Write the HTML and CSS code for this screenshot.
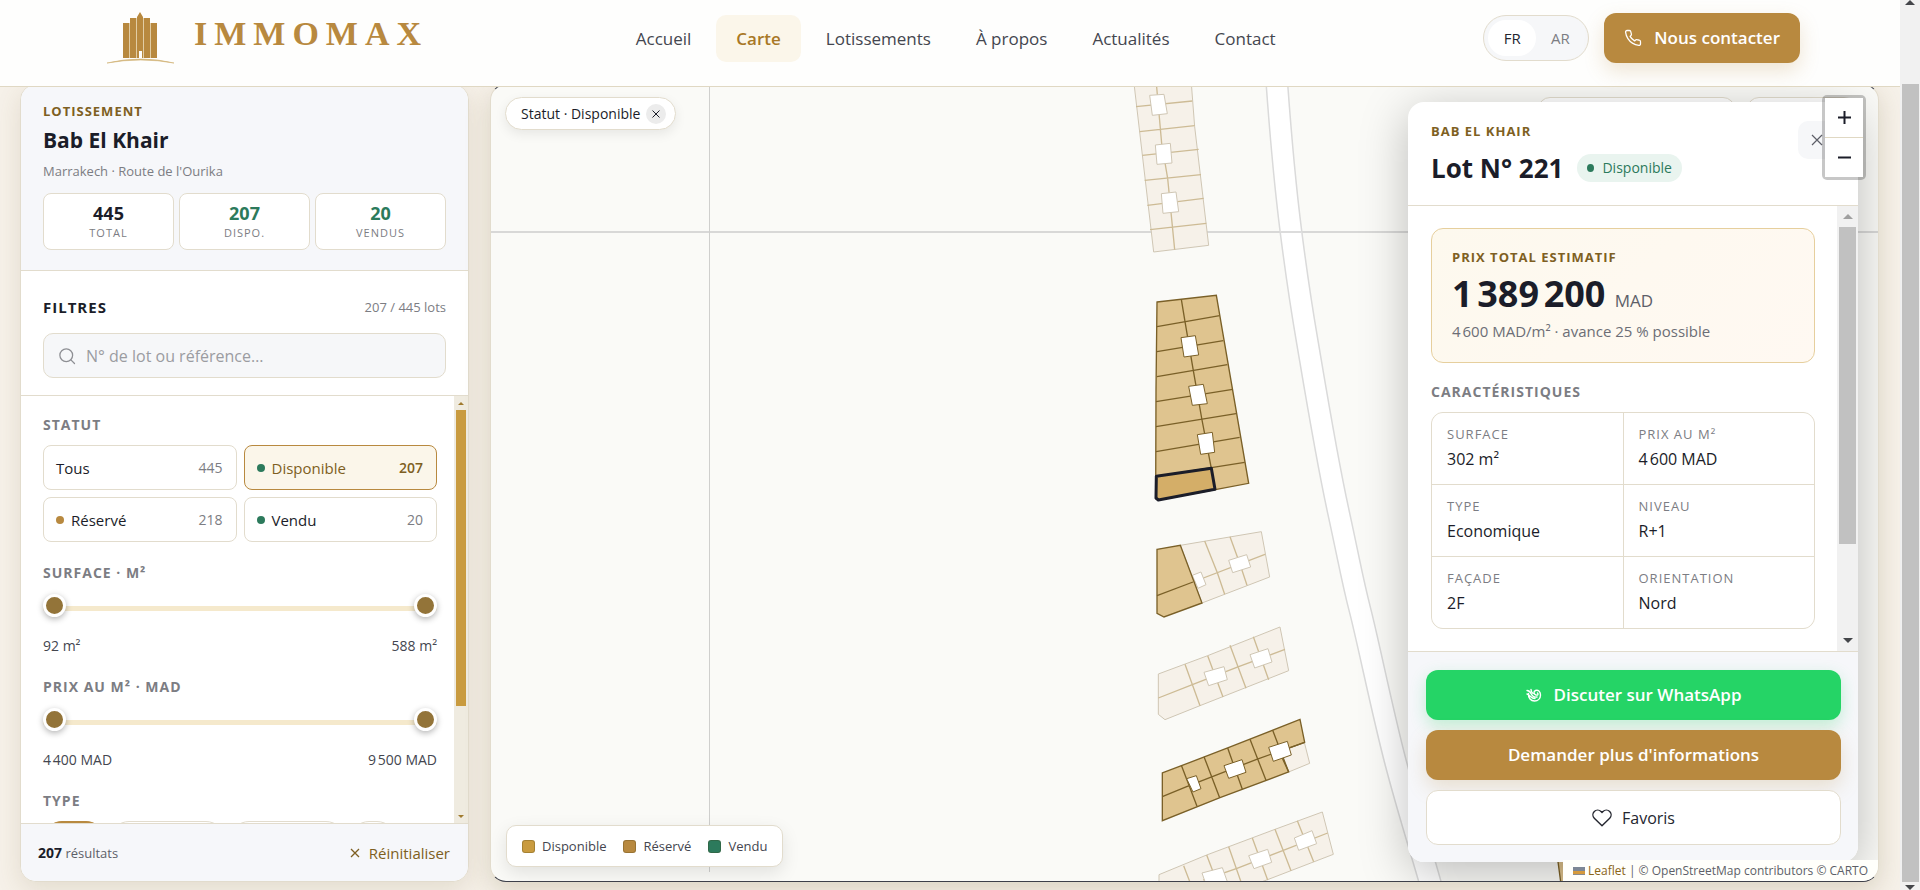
FILE: index.html
```html
<!DOCTYPE html>
<html lang="fr">
<head>
<meta charset="utf-8">
<title>IMMOMAX · Carte</title>
<link rel="stylesheet" href="styles.css">
</head>
<body>
<div class="page">
  <header class="topbar">
    <div class="topbar-inner">
      <a class="brand" href="#">
        <svg class="brand-mark" width="68" height="54" viewBox="0 0 68 54" aria-hidden="true">
          <g fill="#b8893f">
            <path d="M16 12h6v35h-6zM23 7h6v40h-6zM37 7h6v40h-6zM44 12h6v35h-6z"/>
            <path d="M30 6l3-5 3 5v34h-4v7h-2z"/><path d="M35 40h1v7h-1z"/>
          </g>
          <path d="M22.500 12v35M29.500 7v40M36.500 7v40M43.500 12v35" stroke="#e2cda4" fill="none"/>
          <path d="M0 52Q34 44 67 52Q34 46 0 52z" fill="#d2b377" stroke="#d2b377" stroke-width=".6"/>
        </svg>
        <span class="brand-name">IMMOMAX</span>
      </a>
      <nav class="nav">
        <a href="#">Accueil</a>
        <a class="active" href="#">Carte</a>
        <a href="#">Lotissements</a>
        <a href="#">À propos</a>
        <a href="#">Actualités</a>
        <a href="#">Contact</a>
      </nav>
      <div class="actions">
        <div class="lang">
          <button class="on" type="button">FR</button>
          <button type="button">AR</button>
        </div>
        <a class="btn btn-gold cta" href="#">
          <svg width="18" height="18" viewBox="0 0 24 24" fill="none" stroke="currentColor" stroke-width="1.700" stroke-linejoin="round" stroke-linecap="round" aria-hidden="true"><path d="M22 16.900v3a2 2 0 0 1-2.200 2 19.800 19.800 0 0 1-8.600-3.100 19.500 19.500 0 0 1-6-6A19.800 19.800 0 0 1 2.100 4.200 2 2 0 0 1 4.100 2h3a2 2 0 0 1 2 1.700c.1 1 .4 1.900.7 2.800a2 2 0 0 1-.5 2.100L8.100 9.900a16 16 0 0 0 6 6l1.300-1.300a2 2 0 0 1 2.100-.4c.9.300 1.800.6 2.800.7a2 2 0 0 1 1.700 2z"/></svg>
          Nous contacter
        </a>
      </div>
    </div>
  </header>

  <main class="layout">
    <aside class="sidebar">
      <section class="summary">
        <p class="eyebrow">LOTISSEMENT</p>
        <h1>Bab El Khair</h1>
        <p class="place">Marrakech · Route de l'Ourika</p>
        <div class="stats">
          <div class="stat"><strong>445</strong><span>TOTAL</span></div>
          <div class="stat green"><strong>207</strong><span>DISPO.</span></div>
          <div class="stat green"><strong>20</strong><span>VENDUS</span></div>
        </div>
      </section>
      <section class="search">
        <div class="search-head"><h2>FILTRES</h2><span>207 / 445 lots</span></div>
        <label class="search-box">
          <svg width="18" height="18" viewBox="0 0 24 24" fill="none" stroke="#8e8f94" stroke-width="1.700" stroke-linecap="round" aria-hidden="true"><circle cx="11" cy="11" r="8.500"/><path d="M17.200 17.200 22 22"/></svg>
          <input type="text" placeholder="N° de lot ou référence…" aria-label="N° de lot ou référence">
        </label>
      </section>
      <div class="filters-wrap">
        <div class="filters">
          <section>
            <h3>STATUT</h3>
            <div class="status-grid">
              <button type="button">Tous<em>445</em></button>
              <button type="button" class="selected"><i class="dot green-dot"></i>Disponible<em>207</em></button>
              <button type="button"><i class="dot gold-dot"></i>Réservé<em>218</em></button>
              <button type="button"><i class="dot green-dot"></i>Vendu<em>20</em></button>
            </div>
          </section>
          <section>
            <h3>SURFACE · M²</h3>
            <div class="range">
              <span class="range-track"></span>
              <input type="range" min="92" max="588" value="92" aria-label="Surface minimale">
              <input type="range" min="92" max="588" value="588" aria-label="Surface maximale">
            </div>
            <div class="range-values"><span>92 m²</span><span>588 m²</span></div>
          </section>
          <section>
            <h3>PRIX AU M² · MAD</h3>
            <div class="range">
              <span class="range-track"></span>
              <input type="range" min="4400" max="9500" value="4400" aria-label="Prix minimal">
              <input type="range" min="4400" max="9500" value="9500" aria-label="Prix maximal">
            </div>
            <div class="range-values"><span>4&#8239;400 MAD</span><span>9&#8239;500 MAD</span></div>
          </section>
          <section>
            <h3>TYPE</h3>
            <div class="chips">
              <button type="button" class="chip chip-s chip-on" aria-label="Type 1"></button>
              <button type="button" class="chip chip-l" aria-label="Type 2"></button>
              <button type="button" class="chip chip-l" aria-label="Type 3"></button>
              <button type="button" class="chip chip-xs" aria-label="Type 4"></button>
            </div>
          </section>
        </div>
        <div class="bar bar-gold" aria-hidden="true">
          <span class="arrow up"></span><span class="thumb"></span><span class="rest"></span><span class="arrow down"></span>
        </div>
      </div>
      <footer class="results">
        <span><b>207</b> résultats</span>
        <button type="button" class="reset">
          <svg width="10" height="10" viewBox="0 0 10 10" stroke="currentColor" stroke-width="1.300" aria-hidden="true"><path d="M1 1l8 8M9 1l-8 8"/></svg>
          Réinitialiser
        </button>
      </footer>
    </aside>

    <section class="map" aria-label="Carte">
      <svg class="canvas" width="1388" height="797" aria-hidden="true">
        <g transform="translate(-491 -85)">
          <path d="M491 232H1879" stroke="#d8d8d7" stroke-width="2"/>
          <path d="M709.500 85V872" stroke="#cfcfcd"/>
          <path d="M1277 85C1281 140 1285 185 1291 232S1301 305 1307 340 1326 455 1338 510 1352 579 1360 610 1382 710 1395 760 1421 850 1430 882L1434 896" fill="none" stroke="#dadada" stroke-width="23"/>
          <path d="M1277 85C1281 140 1285 185 1291 232S1301 305 1307 340 1326 455 1338 510 1352 579 1360 610 1382 710 1395 760 1421 850 1430 882L1434 896" fill="none" stroke="#ffffff" stroke-width="20"/>
          <path d="M1281 232H1301" stroke="#dcdcdc" stroke-width="2"/>
          <!-- upper block, not available -->
          <g class="off" transform="translate(1100 80) scale(.33333)">
            <path class="lot" d="M102 10 161 516 326 496 284 140 274 10z"/>
            <path class="cut" d="M108 80 277 63M119 155 284 137M127 226 296 208M134 301 303 284M142 376 311 355M150 449 319 430M169 10 185 190 203 295 224 509"/>
            <path class="void" d="M149 46 192 43 202 101 157 106zM166 195 211 190 216 249 171 253zM184 341 228 336 236 395 189 400z"/>
          </g>
          <!-- main available block -->
          <g class="on" transform="translate(1120 280) scale(.33333)">
            <path class="lot" d="M111 66 289 46 386 610 286 629 114 660 107 655 108 330z"/>
            <path class="cut" d="M111 140 299 107M111 215 310 182M111 290 322 254M108 365 338 328M108 440 348 401M108 515 359 472M108 589 374 547M184 58 195 125 220 272 246 420 274 565"/>
            <path class="void" d="M183 173 226 167 236 225 192 231zM206 319 250 313 262 371 217 376zM232 464 277 457 284 517 242 523z"/>
            <path class="picked" d="M109 589 274 565 285 628 115 660 108 654z"/>
          </g>
          <g transform="translate(1120 510) scale(.33333)">
            <g class="off">
              <path class="lot" d="M181 106 424 65 449 201 246 279z"/>
              <path class="cut" d="M254 93 292 188 314 253M330 80 359 160 381 226M219 216 435 133"/>
              <path class="void" d="M217 196 243 186 258 224 234 235zM326 151 380 134 392 171 338 188z"/>
              <path class="lot" d="M115 492 263 437 480 351 506 482 240 587 135 629 115 613z"/>
              <path class="cut" d="M195 463 240 587M263 437 309 561M330 406 378 535M400 380 446 509M115 564 219 523 356 470 495 418"/>
              <path class="void" d="M252 487 312 470 322 509 266 527zM390 434 444 416 456 456 404 474z"/>
              <path class="lot" d="M553 697 569 760 506 786 478 725z"/>
              <path class="lot" d="M117 1094 260 1035 465 958 607 906 640 1033 440 1110 117 1230z"/>
              <path class="cut" d="M191 1067 215 1130M260 1035 300 1140M326 1010 368 1130M397 984 443 1110M465 958 513 1082M532 932 581 1055M250 1110 351 1075 488 1022 623 969"/>
              <path class="void" d="M246 1089 307 1073 322 1115 262 1135zM386 1037 443 1018 455 1057 402 1076zM523 984 576 962 590 1001 536 1021z"/>
            </g>
            <g class="on">
              <path class="lot" d="M111 118 181 106 246 279 132 321 111 310z"/>
              <path class="cut" d="M111 257 219 216"/>
              <path class="lot" d="M127 789 323 714 540 628 554 697 478 725 506 786 300 863 127 932z"/>
              <path class="cut" d="M184 766 231 889M252 740 299 863M323 714 367 838M390 688 438 811M458 661 506 786M127 860 200 830 277 800 410 748 554 697"/>
              <path class="void" d="M200 806 229 797 243 836 219 846zM312 767 366 749 378 787 326 805zM446 712 502 694 514 735 460 754z"/>
            </g>
            <path d="M1312 1040 1322 1115 1460 1115 1440 1040z" fill="#dcc08a" stroke="#7a6028" stroke-width="4"/>
          </g>
        </g>
      </svg>

      <div class="map-chip">Statut · Disponible
        <button type="button" aria-label="Retirer le filtre"><svg width="8" height="8" viewBox="0 0 8 8" stroke="currentColor" aria-hidden="true"><path d="M.5.5l7 7M7.500.5l-7 7"/></svg></button>
      </div>
      <div class="map-tools"><span class="tool tool-wide"></span><span class="tool"></span></div>

      <div class="legend">
        <span><i class="sw sw-a"></i>Disponible</span>
        <span><i class="sw sw-b"></i>Réservé</span>
        <span><i class="sw sw-c"></i>Vendu</span>
      </div>

      <article class="panel">
        <header class="panel-head">
          <div>
            <p class="eyebrow">BAB EL KHAIR</p>
            <div class="panel-title"><h2>Lot N° 221</h2><span class="badge"><i></i>Disponible</span></div>
          </div>
          <button type="button" class="close" aria-label="Fermer"><svg width="12" height="12" viewBox="0 0 12 12" stroke="currentColor" stroke-width="1.200" aria-hidden="true"><path d="M1 1l10 10M11 1 1 11"/></svg></button>
        </header>
        <div class="panel-mid">
          <div class="panel-body">
            <div class="price">
              <p class="eyebrow">PRIX TOTAL ESTIMATIF</p>
              <p class="amount">1&#8239;389&#8239;200 <small>MAD</small></p>
              <p class="note">4&#8239;600 MAD/m² · avance 25 % possible</p>
            </div>
            <h3>CARACTÉRISTIQUES</h3>
            <dl class="specs">
              <div><dt>SURFACE</dt><dd>302 m²</dd></div>
              <div><dt>PRIX AU M²</dt><dd>4&#8239;600 MAD</dd></div>
              <div><dt>TYPE</dt><dd>Economique</dd></div>
              <div><dt>NIVEAU</dt><dd>R+1</dd></div>
              <div><dt>FAÇADE</dt><dd>2F</dd></div>
              <div><dt>ORIENTATION</dt><dd>Nord</dd></div>
            </dl>
          </div>
          <div class="bar bar-grey" aria-hidden="true">
            <span class="arrow up"></span><span class="thumb"></span><span class="rest"></span><span class="arrow down"></span>
          </div>
        </div>
        <footer class="panel-foot">
          <a class="btn btn-green" href="#">
            <svg width="16" height="14" viewBox="0 0 16 14" fill="none" stroke="currentColor" stroke-width="1.400" stroke-linecap="round" stroke-linejoin="round" aria-hidden="true"><path d="M2.500 5.500C2 10 5 13 8.500 13s6-2.500 6-6-2.500-5.500-5-4.500-1.500 4 .5 4.500 2.500-1 1.500-2M1 2.500c2 0 3 1 4 3s3 4 6 3.500M5 1.500c0 2 .5 3 2 4M1 6c1.500.5 2.500 1.500 3.500 2.500S7 10.500 9 10.500"/></svg>
            Discuter sur WhatsApp</a>
          <button type="button" class="btn btn-gold">Demander plus d'informations</button>
          <button type="button" class="btn btn-plain">
            <svg width="20" height="18" viewBox="0 0 20 18" fill="none" stroke="currentColor" stroke-width="1.400" stroke-linejoin="round" aria-hidden="true"><path d="M10 16.800 2.300 9.200A4.700 4.700 0 0 1 9 2.500l1 1 1-1a4.700 4.700 0 0 1 6.700 6.700z"/></svg>
            Favoris</button>
        </footer>
      </article>

      <div class="zoom">
        <button type="button" aria-label="Zoomer"><svg width="13" height="13" viewBox="0 0 13 13" stroke="#1b1d29" stroke-width="2" aria-hidden="true"><path d="M0 6.500h13M6.500 0v13"/></svg></button>
        <button type="button" aria-label="Dézoomer"><svg width="13" height="13" viewBox="0 0 13 13" stroke="#1b1d29" stroke-width="2" aria-hidden="true"><path d="M0 6.500h13"/></svg></button>
      </div>

      <p class="credits"><svg width="12" height="8" viewBox="0 0 12 8" aria-hidden="true"><path fill="#7d8796" d="M0 0h12v4H0z"/><path fill="#d59a3c" d="M0 4h12v3H0z"/><path fill="#8b8b8b" d="M0 7h12v1H0z"/></svg> <a href="#">Leaflet</a> | © OpenStreetMap contributors © CARTO</p>
    </section>
  </main>
</div>
<div class="bar bar-grey page-bar" aria-hidden="true">
  <span class="arrow up dark"></span><span class="thumb"></span><span class="arrow down"></span>
</div>
</body>
</html>
```
FILE: styles.css
```css
* { box-sizing: border-box; }

body {
  margin: 0;
  height: 100vh;
  display: flex;
  overflow: hidden;
  background: #f6f1e9;
  color: #1b1d29;
  font: 15px/20px "Open Sans", "Noto Sans", sans-serif;
}

h1, h2, h3, p, dl, dd { margin: 0; }
button { font: inherit; color: inherit; cursor: pointer; border: 0; background: none; padding: 0; }
a { color: inherit; text-decoration: none; }
em, i { font-style: normal; }

.page { flex: 1; min-width: 0; display: flex; flex-direction: column; }

/* top bar */
.topbar { position: relative; z-index: 20; background: #fefefd; border-bottom: 1px solid #e0d8c3; }
.topbar-inner {
  max-width: 1700px;
  height: 86px;
  margin: 0 auto;
  padding: 0 0 10px 7px;
  display: flex;
  align-items: center;
  justify-content: space-between;
}
.brand { display: flex; align-items: center; gap: 19px; color: #b8893f; }
.brand-name { font: bold 34px/40px "Liberation Serif", serif; letter-spacing: 7px; padding-bottom: 8px; }
.nav { display: flex; gap: 5px; }
.nav a { padding: 11px 20px; font-size: 17px; line-height: 25px; font-weight: 500; color: #44464f; border-radius: 10px; }
.nav .active { background: #fbf6ea; color: #a87826; font-weight: 600; }
.actions { display: flex; align-items: center; gap: 15px; }
.lang { display: flex; padding: 4px; border: 1px solid #e2dccd; border-radius: 24px; background: #f6f7f9; }
.lang button { width: 48px; height: 36px; border-radius: 18px; font-size: 15px; color: #7c7d83; }
.lang .on { background: #fff; color: #24262f; }

.btn {
  display: flex;
  align-items: center;
  justify-content: center;
  gap: 12px;
  height: 50px;
  border-radius: 12px;
  font-size: 17px;
  font-weight: 600;
  color: #fff;
}
.btn-gold { background: #b8893f; box-shadow: 0 8px 20px rgba(184, 137, 63, .22); }
.btn-green { background: #25d466; box-shadow: 0 6px 16px rgba(37, 212, 102, .25); }
.btn-plain { height: 55px; background: #fff; border: 1px solid #e2dccd; color: #24262f; font-size: 16px; font-weight: 500; gap: 10px; }
.cta { padding: 0 20px; }

/* layout */
.layout { flex: 1; min-height: 0; display: flex; gap: 21px; margin-top: -3px; padding: 0 21px 8px 20px; }

.eyebrow { font-size: 13px; font-weight: 700; letter-spacing: 1px; color: #7e5f22; }
h3 { font-size: 14px; line-height: 20px; font-weight: 700; letter-spacing: 1px; color: #7c7d83; }

/* sidebar */
.sidebar {
  width: 449px;
  flex: none;
  display: flex;
  flex-direction: column;
  overflow: hidden;
  background: #fff;
  border: 1px solid #e2dccd;
  border-radius: 16px;
  box-shadow: 0 8px 26px rgba(110, 90, 40, .14);
}
.summary { padding: 16px 22px 20px; background: #f6f7fa; border-bottom: 1px solid #e2dccd; }
.summary h1 { margin-top: 4px; font-size: 21px; line-height: 30px; font-weight: 700; }
.place { margin-top: 6px; font-size: 13px; color: #7c7d83; }
.stats { display: flex; gap: 5px; margin-top: 12px; }
.stat { flex: 1; height: 57px; padding-top: 8px; text-align: center; background: #fff; border: 1px solid #e2dccd; border-radius: 8px; }
.stat strong { display: block; font-size: 18px; line-height: 22px; font-weight: 700; }
.stat span { display: block; font-size: 11px; line-height: 18px; letter-spacing: 1px; color: #7c7d83; }
.green strong { color: #2c7a5c; }

.search { padding: 24px 22px 17px; border-bottom: 1px solid #e2dccd; }
.search-head { display: flex; justify-content: space-between; align-items: center; line-height: 24px; }
.search-head h2 { font-size: 15px; font-weight: 700; letter-spacing: 1px; }
.search-head span { font-size: 13px; color: #7c7d83; }
.search-box { display: flex; align-items: center; gap: 10px; height: 45px; margin-top: 14px; padding: 0 14px; background: #f6f7f9; border: 1px solid #e2dccd; border-radius: 10px; }
.search-box input { flex: 1; min-width: 0; padding: 0; border: 0; outline: 0; background: none; font: inherit; font-size: 16px; }
.search-box input::placeholder { color: #9b9ca1; }

.filters-wrap { flex: 1; min-height: 0; display: flex; }
.filters { flex: 1; overflow: hidden; padding: 19px 17px 0 22px; display: flex; flex-direction: column; gap: 21px; }
.filters h3 { margin-bottom: 10px; }
.status-grid { display: grid; grid-template-columns: 1fr 1fr; gap: 7px; }
.status-grid button { display: flex; align-items: center; height: 45px; padding: 0 13px 0 12px; border: 1px solid #e2dccd; border-radius: 8px; font-size: 15px; }
.status-grid em { margin-left: auto; font-size: 14px; color: #7c7d83; }
.status-grid .selected { background: #fbf6ea; border-color: #b8893f; color: #7e5f22; font-weight: 500; }
.selected em { color: #7e5f22; font-weight: 600; }
.dot { width: 8px; height: 8px; margin-right: 7px; border-radius: 50%; }
.green-dot { background: #2c7a5c; }
.gold-dot { background: #b8893f; }

.range { display: grid; height: 24px; }
.range > * { grid-area: 1 / 1; }
.range-track { height: 5px; margin-top: 13px; background: #f5e9cc; border-radius: 3px; }
.range input { -webkit-appearance: none; appearance: none; width: 100%; height: 24px; margin: 0; background: none; pointer-events: none; }
.range input::-webkit-slider-thumb {
  -webkit-appearance: none;
  width: 23px;
  height: 23px;
  border: 3px solid #fff;
  border-radius: 50%;
  background: #937439;
  box-shadow: 0 2px 6px rgba(0, 0, 0, .3);
  pointer-events: auto;
}
.range-values { display: flex; justify-content: space-between; margin-top: 19px; font-size: 14px; font-weight: 500; color: #44464f; }

.chips { display: flex; gap: 5px; }
.chip { height: 38px; border: 1px solid #e2dccd; border-radius: 19px; }
.chip-on { background: #b8893f; border-color: #b8893f; }
.chip-xs { width: 46px; }
.chip-s { width: 62px; }
.chip-l { width: 115px; }

.results { display: flex; align-items: center; justify-content: space-between; height: 58px; padding: 0 18px 0 17px; background: #f6f7fa; border-top: 1px solid #e2dccd; font-size: 13px; color: #5d5f68; }
.results b { font-size: 14px; color: #1b1d29; }
.reset { display: flex; align-items: center; gap: 9px; font-size: 15px; font-weight: 500; color: #7e5f22; }

/* drawn scrollbars */
.bar { flex: none; display: flex; flex-direction: column; align-items: center; }
.bar .arrow { height: 14px; width: 100%; display: grid; place-items: center; }
.bar .arrow::before { content: ""; border: 3px solid transparent; }
.bar .rest { flex: 103; }
.bar .thumb { flex: 297; width: 10px; }
.bar-gold { width: 14px; background: #efebe0; }
.bar-gold .thumb { background: #c99b3f; }
.bar-gold .up::before { border-bottom-color: #a07b2e; margin-top: -3px; }
.bar-gold .down::before { border-top-color: #a07b2e; margin-bottom: -3px; }
.bar-grey { width: 21px; background: #f1f1f1; }
.bar-grey .arrow { height: 21px; }
.bar-grey .arrow::before { border-width: 5px; }
.bar-grey .thumb { width: 17px; background: #c1c1c1; flex: 316; }
.bar-grey .rest { flex: 86; }
.bar-grey .up::before { border-bottom-color: #a0a0a0; margin-top: -5px; }
.bar-grey .down::before { border-top-color: #44464a; margin-bottom: -5px; }
.page-bar { width: 20px; }
.page-bar .up { height: 84px; place-items: start center; }
.page-bar .up::before { border-bottom-color: #44464a; }
.page-bar .down { height: 8px; place-items: end center; overflow: hidden; }

/* map */
.map {
  position: relative;
  flex: 1;
  min-width: 0;
  overflow: hidden;
  background: #fafaf7;
  border: 1px solid;
  border-color: #3e404a #e2dccd;
  border-radius: 16px;
  box-shadow: 0 8px 26px rgba(110, 90, 40, .2);
}
.canvas { position: absolute; left: 0; top: 0; }
.off .lot { fill: #f6f1e9; stroke: #cfc6b4; stroke-width: 3; }
.off .cut { fill: none; stroke: #cdbb95; stroke-width: 4; }
.off .void { fill: #fff; stroke: #cfc6b4; stroke-width: 3; }
.on .lot { fill: #dfc48f; stroke: #7a6028; stroke-width: 4; }
.on .cut { fill: none; stroke: #7a6028; stroke-width: 4; }
.on .void { fill: #fff; stroke: #7a6028; stroke-width: 3; }
.on .picked { fill: #d4ae68; stroke: #1b1d29; stroke-width: 9; stroke-linejoin: round; }

.map-chip {
  position: absolute;
  left: 14px;
  top: 12px;
  display: flex;
  align-items: center;
  gap: 6px;
  height: 33px;
  padding: 0 9px 0 15px;
  background: #fff;
  border: 1px solid #e2dccd;
  border-radius: 17px;
  box-shadow: 0 4px 12px rgba(0, 0, 0, .08);
  font-size: 14px;
}
.map-chip button { width: 20px; height: 20px; display: grid; place-items: center; border-radius: 50%; background: #ececec; }
.map-tools { position: absolute; right: 22px; top: 12px; display: flex; gap: 12px; }
.tool { width: 109px; height: 36px; background: #fff; border: 1px solid #e2dccd; border-radius: 12px; }
.tool-wide { width: 197px; }

.legend {
  position: absolute;
  left: 15px;
  bottom: 14px;
  display: flex;
  align-items: center;
  gap: 17px;
  height: 42px;
  padding: 0 15px;
  background: #fff;
  border: 1px solid #e2dccd;
  border-radius: 10px;
  box-shadow: 0 6px 18px rgba(0, 0, 0, .1);
  font-size: 13px;
  font-weight: 500;
  color: #44464f;
}
.legend span { display: flex; align-items: center; gap: 7px; }
.sw { width: 13px; height: 13px; border: 1px solid rgba(60, 50, 10, .25); border-radius: 3px; }
.sw-a { background: #c99b3f; }
.sw-b { background: #b8893f; }
.sw-c { background: #2c7a5c; }

/* lot panel */
.panel {
  position: absolute;
  right: 20px;
  top: 17px;
  bottom: 19px;
  width: 450px;
  display: flex;
  flex-direction: column;
  overflow: hidden;
  background: #fff;
  border-radius: 16px;
  box-shadow: 0 10px 48px rgba(0, 0, 0, .25);
}
.panel-head { display: flex; justify-content: space-between; align-items: flex-start; padding: 19px 22px 19px 23px; border-bottom: 1px solid #e2dccd; }
.panel-title { display: flex; align-items: center; gap: 14px; margin-top: 9px; }
.panel-title h2 { font-size: 26px; line-height: 36px; font-weight: 700; }
.badge { display: flex; align-items: center; gap: 8px; height: 28px; padding: 0 10px; border-radius: 14px; background: #e9f4ef; color: #2c7a5c; font-size: 14px; font-weight: 500; }
.badge i { width: 7px; height: 8px; border-radius: 50%; background: #2c7a5c; }
.close { width: 38px; height: 38px; display: grid; place-items: center; background: #f6f7f9; border-radius: 10px; color: #5d5f68; }
.panel-mid { flex: 1; min-height: 0; display: flex; }
.panel-body { flex: 1; overflow: hidden; padding: 22px 22px 0 23px; }
.price { height: 135px; padding: 18px 20px; border: 1px solid #e6cf9d; border-radius: 12px; background: linear-gradient(135deg, #fdf9ee, #fff9f2); }
.amount { margin-top: 6px; font-size: 36px; line-height: 42px; font-weight: 700; }
.amount small { font-size: 17px; font-weight: 400; color: #5d5f68; }
.note { margin-top: -1px; font-size: 15px; color: #6c6e76; }
.panel-body h3 { margin: 19px 0 10px; }
.specs { display: grid; grid-template-columns: 1fr 1fr; gap: 1px; overflow: hidden; background: #e2dccd; border: 1px solid #e2dccd; border-radius: 12px; }
.specs div { padding: 13px 15px 14px; background: #fff; }
.specs dt { font-size: 13px; line-height: 16px; letter-spacing: 1px; color: #7c7d83; }
.specs dd { margin-top: 6px; font-size: 16px; line-height: 22px; font-weight: 500; }
.panel-foot { display: flex; flex-direction: column; gap: 10px; padding: 18px 17px 17px 18px; background: #f6f7fa; border-top: 1px solid #e2dccd; }

.zoom { position: absolute; right: 12px; top: 10px; display: grid; gap: 1px; border: 3px solid rgba(0, 0, 0, .22); border-radius: 5px; background: #e0d8c3; background-clip: padding-box; }
.zoom button { width: 38px; height: 39px; display: grid; place-items: center; background: #fff; }

.credits { position: absolute; right: 0; bottom: 0; padding: 0 10px; background: #fffffb; font-size: 12px; line-height: 21px; color: #5d5f68; }
.credits a { color: #8a6517; }
```
